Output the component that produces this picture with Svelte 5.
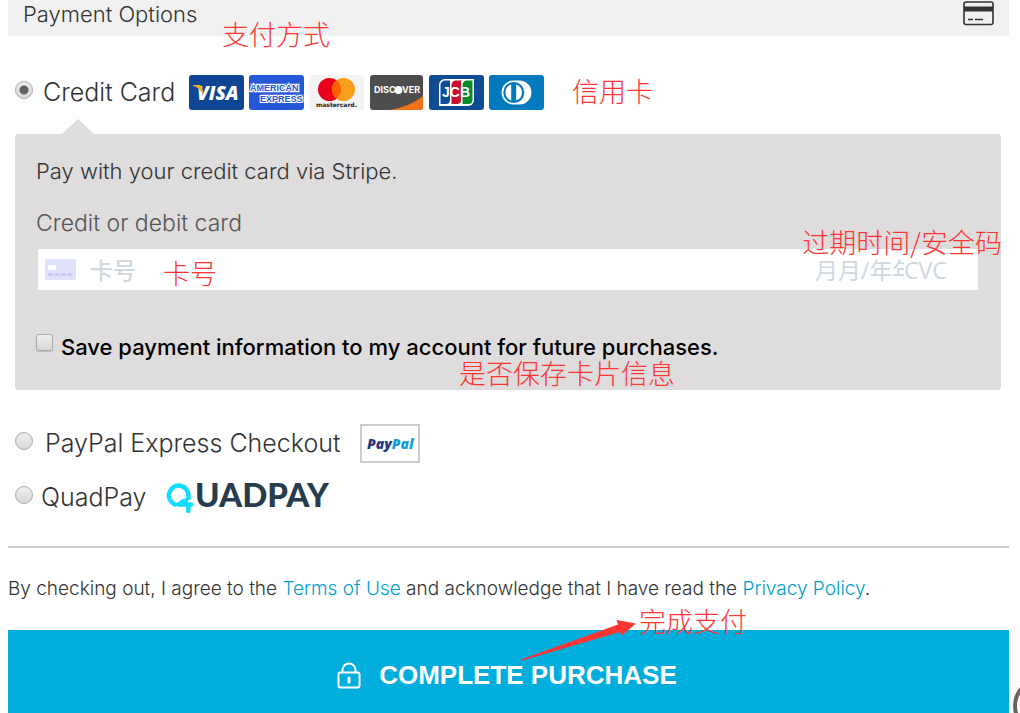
<script>
  let method = $state('card');
  let save = $state(false);
</script>

<main>
  <header class="bar">
    <h1>Payment Options</h1>
    <svg class="bar-icon" width="31" height="25" viewBox="0 0 31 25" aria-hidden="true">
      <rect x="1" y="1" width="29" height="22.500" rx="2" fill="none" stroke="#333" stroke-width="1.600" />
      <rect x="1" y="5.500" width="29" height="5" fill="#333" />
      <path d="M5 18.500h5M12 18.500h8" stroke="#333" stroke-width="1.600" />
    </svg>
    <span class="note n-method">支付方式</span>
  </header>

  <form onsubmit={(e) => e.preventDefault()}>
    <div class="option card-option">
      <input type="radio" id="m-card" name="method" value="card" bind:group={method} />
      <label for="m-card">Credit Card</label>
      <div class="brands">
        <svg width="55" height="35" viewBox="0 0 55 35" role="img" aria-label="Visa">
          <rect width="55" height="35" rx="3" fill="#0e4595" />
          <text x="8" y="25" class="visa">VISA</text>
          <path d="M4 10h6.500q1.800 0 2.300 2l1.700 7.500Q10.500 13 4 10.800z" fill="#f2ae14" />
        </svg>
        <svg width="55" height="35" viewBox="0 0 55 35" role="img" aria-label="American Express">
          <rect width="55" height="35" rx="3" fill="#2557d6" />
          <path d="M1 8h50v10H1zM12 19h43v9H12z" fill="#fff" opacity=".25" />
          <text x="1" y="16" class="amex">AMERICAN</text>
          <text x="11" y="27" class="amex">EXPRESS</text>
        </svg>
        <svg width="55" height="35" viewBox="0 0 55 35" role="img" aria-label="Mastercard">
          <rect width="55" height="35" rx="3" fill="#f3f3f3" />
          <circle cx="20.500" cy="14.500" r="11.500" fill="#eb001b" />
          <circle cx="34.500" cy="14.500" r="11.500" fill="#f79e1b" />
          <path d="M27.500 5.380a11.500 11.500 0 0 1 0 18.240a11.500 11.500 0 0 1 0-18.240z" fill="#ff5f00" />
          <text x="27.500" y="32" text-anchor="middle" class="mc">mastercard.</text>
        </svg>
        <svg width="55" height="35" viewBox="0 0 55 35" role="img" aria-label="Discover">
          <rect x="1" width="53" height="35" rx="3" fill="#4d4d4d" />
          <path d="M54 21v11a3 3 0 0 1-3 3H21Q42 31 54 21z" fill="#f47216" />
          <text x="5" y="18" class="disc">DISC</text>
          <circle cx="29.500" cy="15" r="3.900" fill="#fff" />
          <text x="33" y="18" class="disc">VER</text>
        </svg>
        <svg width="55" height="35" viewBox="0 0 55 35" role="img" aria-label="JCB">
          <rect width="55" height="35" rx="3" fill="#0e4c96" />
          <path d="M16 4h29v21a6 6 0 0 1-6 6H10V10a6 6 0 0 1 6-6z" fill="#fff" />
          <path d="M16.500 5.500H21V25a4 4 0 0 1-4 4h-5.500V10a4.500 4.500 0 0 1 5-4.500z" fill="#0e4c96" />
          <path d="M27 5.500h5V25a4 4 0 0 1-4 4h-5.500V10a4.500 4.500 0 0 1 4.500-4.500z" fill="#c8102e" />
          <path d="M38 5.500h5.500V25a4 4 0 0 1-4 4h-6V10a4.500 4.500 0 0 1 4.500-4.500z" fill="#0a8a2c" />
          <text x="13" y="22" class="jcb">JCB</text>
        </svg>
        <svg width="55" height="35" viewBox="0 0 55 35" role="img" aria-label="Diners Club">
          <rect width="55" height="35" rx="3" fill="#0079be" />
          <path d="M24.500 5.500h6a12 12 0 0 1 0 24h-6a12 12 0 0 1 0-24z" fill="#fff" />
          <circle cx="24.800" cy="17.500" r="10.500" fill="#0079be" />
          <path d="M22.200 9.400a8.600 8.600 0 0 0 0 16.200zM27.200 9.400a8.600 8.600 0 0 1 0 16.200z" fill="#fff" />
        </svg>
      </div>
      <span class="note n-card">信用卡</span>
    </div>

    <section class="panel">
      <p class="lead">Pay with your credit card via Stripe.</p>
      <label class="field-label" for="number">Credit or debit card</label>
      <div class="field">
        <svg width="31" height="21" viewBox="0 0 31 21" aria-hidden="true">
          <rect width="31" height="21" rx="2" fill="#e0e2fb" />
          <rect x="3" y="6" width="8" height="5" rx="1" fill="#fff" />
          <path d="M3 15.500h25" stroke="#c4c5f6" stroke-width="2.500" stroke-dasharray="5 1.500" />
        </svg>
        <input id="number" class="number" type="text" placeholder="卡号" />
        <input class="expiry" type="text" placeholder="月月/年年" aria-label="月月/年年" />
        <input class="cvc" type="text" placeholder="CVC" aria-label="CVC" />
        <span class="note n-number">卡号</span>
        <span class="note n-expiry">过期时间/安全码</span>
      </div>
      <div class="save">
        <input type="checkbox" id="save" bind:checked={save} />
        <label for="save">Save payment information to my account for future purchases.</label>
        <span class="note n-save">是否保存卡片信息</span>
      </div>
    </section>

    <div class="option paypal-option">
      <input type="radio" id="m-paypal" name="method" value="paypal" bind:group={method} />
      <label for="m-paypal">PayPal Express Checkout</label>
      <svg class="paypal" width="60" height="39" viewBox="0 0 60 39" role="img" aria-label="PayPal">
        <rect x="1" y="1" width="58" height="37" fill="#fff" stroke="#ccc" stroke-width="2" />
        <text x="7" y="25" class="pp"><tspan fill="#253b80">Pay</tspan><tspan fill="#179bd7">Pal</tspan></text>
      </svg>
    </div>

    <div class="option quad-option">
      <input type="radio" id="m-quad" name="method" value="quadpay" bind:group={method} />
      <label for="m-quad">QuadPay</label>
      <svg class="quad" width="172" height="34" viewBox="0 0 172 34" role="img" aria-label="QuadPay">
        <path d="M9 23.500A9.800 9.800 0 1 1 22.500 14.500V17M12.500 23.500H25M20 19.500q-5 1-6 4M22.300 23.500V30" fill="none" stroke="#0fdcff" stroke-width="4.500" stroke-linecap="round" stroke-linejoin="round" />
        <text x="29" y="26" class="qp">UADPAY</text>
      </svg>
    </div>

    <hr />

    <p class="terms">
      By checking out, I agree to the <a href="#terms">Terms of Use</a> and acknowledge that I have read the <a href="#privacy">Privacy Policy</a>.
    </p>

    <div class="submit">
      <button type="submit">
        <svg width="24" height="27" viewBox="0 0 24 27" fill="none" stroke="#fff" stroke-width="2" aria-hidden="true">
          <rect x="1.500" y="10.500" width="21" height="15" rx="2" />
          <path d="M5.500 10.500V8a6.500 6.500 0 0 1 13 0v2.500" />
          <path d="M12 16v4" stroke-width="3" stroke-linecap="round" />
        </svg>
        <span>COMPLETE PURCHASE</span>
      </button>
      <svg class="arrow" width="120" height="44" viewBox="0 0 120 44" aria-hidden="true">
        <path d="M2 41.500L99 6.500L97.500 2L117 5.500L102.500 18L101 14L3 42.500z" fill="#ff3534" />
      </svg>
      <span class="note n-finish">完成支付</span>
    </div>
  </form>

  <button class="help" type="button" aria-label="Help"></button>
</main>

<style>
  :global(body) {
    margin: 0;
    background: #fff;
  }
  main {
    padding: 0 11px 0 8px;
    font-family: Inter, 'Noto Sans CJK SC', sans-serif;
    font-weight: 300;
    color: #333;
  }
  .bar,
  .option,
  .field,
  .save,
  .submit {
    position: relative;
    display: flex;
    align-items: center;
  }
  .bar {
    height: 36px;
    box-sizing: border-box;
    padding: 0 15px 9px;
    justify-content: space-between;
    background: #f1f1f1;
  }
  h1 {
    margin: 0;
    font-size: 22px;
    font-weight: 300;
    line-height: 26px;
  }
  .option {
    padding-left: 7px;
    font-size: 25px;
    line-height: 32px;
  }
  input[type='radio'],
  input[type='checkbox'] {
    appearance: none;
    flex: none;
    box-sizing: border-box;
    margin: 0 0 6px;
    width: 18px;
    height: 18px;
    border: 1px solid #aaa;
    border-radius: 50%;
    background: linear-gradient(#eee, #d8d8d8);
  }
  input[type='radio']:checked {
    background: radial-gradient(circle, #606060 4px, transparent 5px), linear-gradient(#eee, #d8d8d8);
  }
  input[type='checkbox'] {
    margin-bottom: 9px;
    width: 17px;
    height: 17px;
    border-radius: 3px;
    box-shadow: 0 1px 1px #bbb;
  }
  input[type='checkbox']:checked {
    background: #606060;
  }
  .option label {
    padding-bottom: 2px;
  }
  .card-option {
    margin-top: 39px;
  }
  .card-option label {
    margin: 0 14px 0 10px;
  }
  .brands {
    display: flex;
    gap: 5px;
  }
  .brands svg {
    display: block;
  }
  .panel {
    position: relative;
    margin: 24px 8px 0 7px;
    padding: 23px 23px 28px;
    border-radius: 3px;
    background: #dedcdd;
  }
  .panel::before {
    content: '';
    position: absolute;
    left: 47px;
    bottom: 100%;
    border: 16px solid transparent;
    border-top: 0;
    border-bottom: 15px solid #dedcdd;
  }
  .lead {
    margin: 0 0 24px -2px;
    font-size: 22px;
    line-height: 28px;
  }
  .field-label {
    display: block;
    margin: 0 0 12px -2px;
    font-size: 23px;
    line-height: 28px;
    color: #555;
  }
  .field {
    height: 41px;
    padding-left: 7px;
    background: #fff;
  }
  .field input {
    box-sizing: border-box;
    min-width: 0;
    height: 41px;
    padding: 0;
    border: 0;
    outline: 0;
    background: none;
    font-family: 'Open Sans', 'Noto Sans CJK SC', sans-serif;
    font-size: 23px;
    color: #32325d;
  }
  .field input::placeholder {
    color: #cfd7df;
    opacity: 1;
  }
  .field .number {
    flex: 1;
    margin-left: 14px;
    font-weight: 500;
  }
  .field .expiry {
    width: 89px;
  }
  .field .cvc {
    width: 74px;
  }
  .save {
    margin: 42px 0 0 -2px;
    gap: 8px;
    font-size: 22px;
    font-weight: 500;
    line-height: 30px;
    color: #000;
  }
  .paypal-option {
    margin-top: 34px;
  }
  .paypal-option label {
    margin: 0 20px 0 12px;
  }
  .quad-option {
    margin-top: 18px;
  }
  .quad-option label {
    margin: 0 20px 0 8px;
  }
  hr {
    margin: 31px 0 0;
    border: 0;
    border-top: 2px solid #ccc;
  }
  .terms {
    margin: 27px 0 27px;
    font-size: 19px;
    line-height: 28px;
  }
  a {
    color: #00a0d0;
    text-decoration: none;
  }
  .submit button {
    display: flex;
    flex: 1;
    align-items: center;
    justify-content: center;
    gap: 18px;
    padding: 30px 3px 23px 0;
    border: 0;
    background: #00aedd;
    font-family: 'Liberation Sans', Arial, sans-serif;
    font-size: 26px;
    font-weight: 700;
    line-height: 30px;
    color: #fff;
  }
  .arrow {
    position: absolute;
    left: 511px;
    top: -12px;
  }
  .help {
    position: fixed;
    right: -51px;
    bottom: -22px;
    width: 58px;
    height: 58px;
    border: 4px solid #666;
    border-radius: 50%;
    background: #fff;
  }
  .note {
    position: absolute;
    font-family: 'Noto Sans CJK SC', sans-serif;
    font-size: 27px;
    font-weight: 300;
    line-height: 30px;
    white-space: nowrap;
    color: #ff3534;
  }
  .n-method {
    left: 214px;
    top: 19px;
  }
  .n-card {
    left: 564px;
    top: 1px;
  }
  .n-number {
    left: 125px;
    top: 9px;
  }
  .n-expiry {
    right: -24px;
    top: -22px;
  }
  .n-save {
    left: 423px;
    top: 26px;
  }
  .n-finish {
    left: 631px;
    top: -24px;
  }
  .visa {
    font: italic 800 19px 'Open Sans', sans-serif;
    fill: #fff;
  }
  .amex {
    font: 700 9px 'Liberation Sans', sans-serif;
    fill: #2557d6;
    stroke: #fff;
    stroke-width: 2px;
    paint-order: stroke;
  }
  .mc {
    font: 600 6px 'DejaVu Sans', sans-serif;
    fill: #222;
  }
  .disc {
    font: 700 9px Inter, sans-serif;
    fill: #fff;
  }
  .jcb {
    font: 700 14px 'Liberation Sans', sans-serif;
    fill: #fff;
  }
  .pp {
    font: italic 800 14px 'Open Sans', sans-serif;
  }
  .qp {
    font: 900 33px Lato, sans-serif;
    fill: #283c50;
  }
</style>
